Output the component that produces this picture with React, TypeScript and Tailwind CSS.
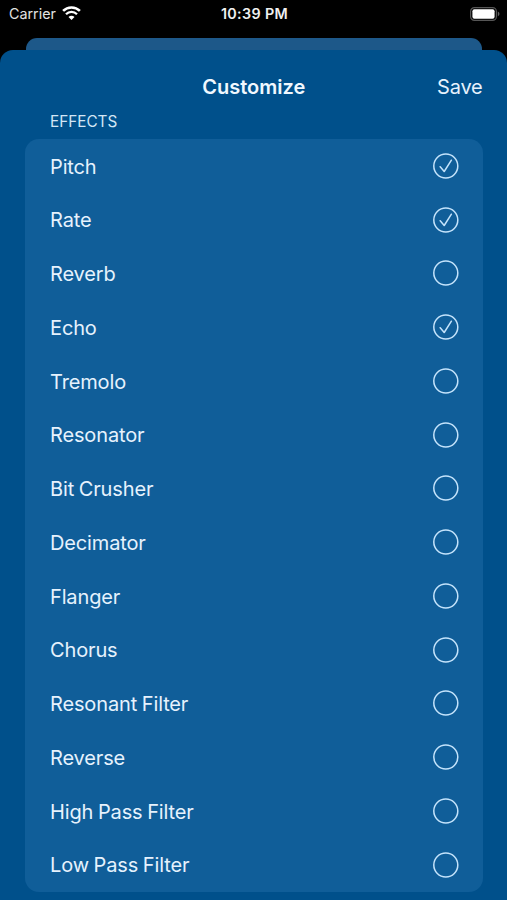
import React, {FC} from 'react';

interface IEffect {
  name: string;
  enabled?: boolean;
}

interface IEffectRowProps {
  effect: IEffect;
}

const effects: IEffect[] = [
  {name: 'Pitch', enabled: true},
  {name: 'Rate', enabled: true},
  {name: 'Reverb'},
  {name: 'Echo', enabled: true},
  {name: 'Tremolo'},
  {name: 'Resonator'},
  {name: 'Bit Crusher'},
  {name: 'Decimator'},
  {name: 'Flanger'},
  {name: 'Chorus'},
  {name: 'Resonant Filter'},
  {name: 'Reverse'},
  {name: 'High Pass Filter'},
  {name: 'Low Pass Filter'},
];

const WifiIcon: FC = () => (
  <svg width="19" height="14" viewBox="0 0 19 14" fill="none">
    <path d="M1.1 4.9a11.9 11.9 0 0 1 16.8 0" stroke="white" strokeWidth="2.6" />
    <path d="M4 8.2a7.8 7.8 0 0 1 11 0" stroke="white" strokeWidth="2.3" />
    <path d="M9.5 14 6.5 11a4.2 4.2 0 0 1 6 0Z" fill="white" />
  </svg>
);

const BatteryIcon: FC = () => (
  <svg width="30" height="14" viewBox="0 0 30 14" fill="none">
    <rect x="0.6" y="0.6" width="25.8" height="12.8" rx="3.8" stroke="#565656" strokeWidth="1.2" />
    <rect x="2.4" y="2.2" width="22.2" height="9.6" rx="2" fill="white" />
    <path d="M27.8 4.6c2.2.9 2.2 3.9 0 4.8Z" fill="#626262" />
  </svg>
);

const StatusBar: FC = () => (
  <div className="grid h-[38px] grid-cols-3 pr-[7px] pb-[11px] pl-[9px] text-white">
    <div className="flex items-center">
      <span className="text-[14.3px] text-[#e2e2e2]">Carrier</span>
      <span className="ml-[6px] -mt-px">
        <WifiIcon />
      </span>
    </div>
    <span className="self-center text-center text-[14.3px] font-semibold tracking-[0.35px] text-[#f0f0f0]">
      10:39 PM
    </span>
    <div className="flex items-center justify-end">
      <BatteryIcon />
    </div>
  </div>
);

const EffectRow: FC<IEffectRowProps> = ({effect}) => {
  return (
    <li className="flex h-[53.75px] items-center justify-between pr-6 pl-[25px]">
      <span className="pt-[1.5px] text-[20px] tracking-[-0.14px] [word-spacing:-0.8px] text-[#e6f2fd]">
        {effect.name}
      </span>
      <svg width="26" height="26" viewBox="0 0 26 26" fill="none" stroke="#c4e3fb" strokeWidth="1.5">
        <circle cx="12.8" cy="13" r="12" />
        {effect.enabled && <path d="M7.2 13.7 11.2 18.5 18.4 7.2" strokeLinecap="round" strokeLinejoin="round" />}
      </svg>
    </li>
  );
};

const App: FC = () => {
  return (
    <div className="flex h-[900px] w-[507px] flex-col overflow-hidden bg-black font-['Inter',sans-serif]">
      <StatusBar />
      <div className="mr-[25px] ml-[26px] h-3 shrink-0 rounded-t-[11px] bg-[#1d5889]" />
      <div className="flex-1 rounded-t-[13px] bg-[#00508b] pr-[24.5px] pl-[25px]">
        <div className="grid h-[59px] grid-cols-3 items-center pt-[14px]">
          <h1 className="col-start-2 text-center text-[20px] font-semibold text-[#f0f8ff]">Customize</h1>
          <button className="text-right text-[20px] tracking-[-0.2px] text-[#e6f2fd]">Save</button>
        </div>
        <h2 className="flex h-[30px] items-center pb-1 pl-[25px] text-[15.3px] text-[#d3e6f5]">EFFECTS</h2>
        <ul className="rounded-[14px] bg-[#105e99]">
          {effects.map(effect => (
            <EffectRow key={effect.name} effect={effect} />
          ))}
        </ul>
      </div>
    </div>
  );
};

export default App;
